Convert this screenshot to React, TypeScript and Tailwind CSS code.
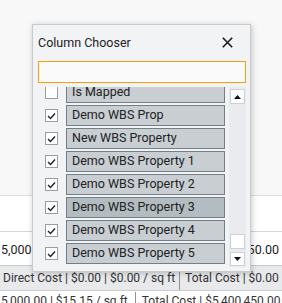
import React from "react";

const rows = [
  { label: "Is Mapped", checked: false, sel: false },
  { label: "Demo WBS Prop", checked: true, sel: false },
  { label: "New WBS Property", checked: true, sel: false },
  { label: "Demo WBS Property 1", checked: true, sel: false },
  { label: "Demo WBS Property 2", checked: true, sel: false },
  { label: "Demo WBS Property 3", checked: true, sel: true },
  { label: "Demo WBS Property 4", checked: true, sel: false },
  { label: "Demo WBS Property 5", checked: true, sel: false },
];

function Check({ checked }: { checked: boolean }) {
  return (
    <div className="w-[13px] h-[13px] border border-[#9a9ea2] bg-white flex items-center justify-center shrink-0">
      {checked && (
        <svg width="9" height="8" viewBox="0 0 9 8">
          <path d="M1 4 L3.5 6.5 L8 1.5" fill="none" stroke="#222" strokeWidth="1.4" />
        </svg>
      )}
    </div>
  );
}

export default function App() {
  return (
    <div className="relative w-[282px] h-[303px] overflow-hidden bg-[#f8f8f8] font-['Roboto',sans-serif] text-[#222]">
      <div className="h-[196px] border-b border-[#dcdcdc]" />
      <div className="h-[36px] bg-white border-b border-[#d4d6d8]" />
      <div className="h-[33px] bg-white flex items-start justify-between pt-[9px] text-[12.5px] text-[#222]">
        <span className="pl-[1px] whitespace-nowrap">5,000.00</span>
        <span className="pr-[3px] whitespace-nowrap">$5,400,450.00</span>
      </div>
      <div className="h-[26px] bg-[#e7e9eb] border-y border-[#c9cdd0] flex items-center text-[12px] text-[#333] whitespace-nowrap">
        <span className="pl-[3px] pr-[4px]">Direct Cost | $0.00 | $0.00 / sq ft</span>
        <span className="h-full border-l border-[#8d9397]" />
        <span className="pl-[5px]">Total Cost | $0.00 | $0.00 / sq ft</span>
      </div>
      <div className="h-[20px] bg-white flex items-start text-[12px] text-[#333] whitespace-nowrap pt-[1px]">
        <span className="pl-[1px] pr-[7px]">5,000.00 | $15.15 / sq ft</span>
        <span className="h-full border-l border-[#8d9397]" />
        <span className="pl-[6px]">Total Cost | $5,400,450.00</span>
      </div>

      {/* Dialog */}
      <div className="absolute left-[32px] top-[24px] w-[219px] h-[248px] bg-[#f2f3f5] border border-[#c8cacc] shadow-[1px_1px_6px_rgba(0,0,0,0.22)] flex flex-col px-[5px]">
        <div className="h-[36px] flex items-center justify-between pt-[1px]">
          <span className="text-[12.5px] text-[#222]">Column Chooser</span>
          <svg width="11" height="11" viewBox="0 0 11 11" className="mr-[12px] mt-[-3px]">
            <path d="M0.8 0.8 L10.2 10.2 M10.2 0.8 L0.8 10.2" stroke="#1a1a1a" strokeWidth="1.6" fill="none" />
          </svg>
        </div>
        <div className="h-[22px] w-[208px] border-[1.5px] border-[#f5a00a] bg-[#fafafa]" />
        <div className="mt-[4px] h-[180px] w-[208px] relative flex overflow-hidden">
          <div className="w-[191px] overflow-hidden">
            <div className="mt-[-5px] flex flex-col gap-[2px]">
              {rows.map((r) => (
                <div key={r.label} className="h-[21px] flex items-center">
                  <div className="w-[28px] pl-[7px] flex items-center">
                    <Check checked={r.checked} />
                  </div>
                  <div
                    className={`w-[159px] h-[21px] border border-[#737f85] flex items-center pl-[5px] text-[12.5px] text-[#222] whitespace-nowrap ${
                      r.sel ? "bg-[#b3bcc1]" : "bg-[#c8ced2]"
                    }`}
                  >
                    {r.label}
                  </div>
                </div>
              ))}
            </div>
          </div>
          <div className="w-[17px] bg-[#e9ebee] flex flex-col items-center pt-[2px]">
            <div className="w-[15px] h-[15px] bg-white border border-[#cdd1d4] flex items-center justify-center">
              <svg width="7" height="4" viewBox="0 0 7 4"><path d="M0 4 L3.5 0 L7 4 Z" fill="#111" /></svg>
            </div>
            <div className="flex-1" />
            <div className="w-[15px] h-[15px] bg-white border border-[#cdd1d4]" />
            <div className="mt-[3px] mb-[1px] w-[15px] h-[14px] bg-white border border-[#cdd1d4] flex items-center justify-center">
              <svg width="7" height="4" viewBox="0 0 7 4"><path d="M0 0 L3.5 4 L7 0 Z" fill="#111" /></svg>
            </div>
          </div>
        </div>
      </div>
    </div>
  );
}
